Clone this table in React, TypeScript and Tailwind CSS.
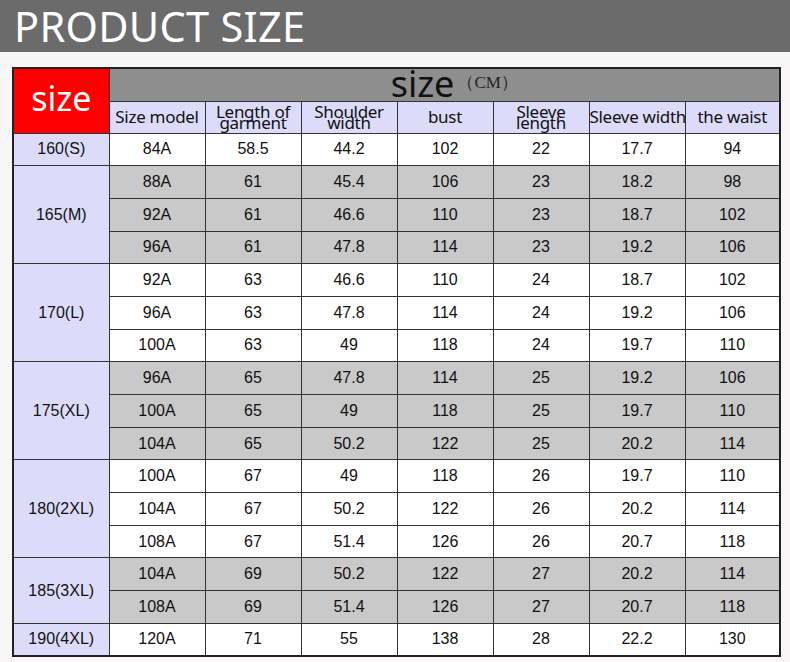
const groups: { size: string; rows: string[][]; shaded: boolean }[] = [
  { size: '160(S)', shaded: false, rows: [['84A', '58.5', '44.2', '102', '22', '17.7', '94']] },
  {
    size: '165(M)',
    shaded: true,
    rows: [
      ['88A', '61', '45.4', '106', '23', '18.2', '98'],
      ['92A', '61', '46.6', '110', '23', '18.7', '102'],
      ['96A', '61', '47.8', '114', '23', '19.2', '106'],
    ],
  },
  {
    size: '170(L)',
    shaded: false,
    rows: [
      ['92A', '63', '46.6', '110', '24', '18.7', '102'],
      ['96A', '63', '47.8', '114', '24', '19.2', '106'],
      ['100A', '63', '49', '118', '24', '19.7', '110'],
    ],
  },
  {
    size: '175(XL)',
    shaded: true,
    rows: [
      ['96A', '65', '47.8', '114', '25', '19.2', '106'],
      ['100A', '65', '49', '118', '25', '19.7', '110'],
      ['104A', '65', '50.2', '122', '25', '20.2', '114'],
    ],
  },
  {
    size: '180(2XL)',
    shaded: false,
    rows: [
      ['100A', '67', '49', '118', '26', '19.7', '110'],
      ['104A', '67', '50.2', '122', '26', '20.2', '114'],
      ['108A', '67', '51.4', '126', '26', '20.7', '118'],
    ],
  },
  {
    size: '185(3XL)',
    shaded: true,
    rows: [
      ['104A', '69', '50.2', '122', '27', '20.2', '114'],
      ['108A', '69', '51.4', '126', '27', '20.7', '118'],
    ],
  },
  { size: '190(4XL)', shaded: false, rows: [['120A', '71', '55', '138', '28', '22.2', '130']] },
];

const headers: (string | [string, string])[] = [
  'Size model',
  ['Length of', 'garment'],
  ['Shoulder', 'width'],
  'bust',
  ['Sleeve', 'length'],
  'Sleeve width',
  'the waist',
];

const App = () => {
  return (
    <div className="min-h-screen w-[790px] bg-[#f8f6f6]">
      <div className="h-[52px] bg-[#6b6b6b] pl-[14px] flex items-center">
        <h1 className="text-white text-[41.5px] leading-[52px] tracking-[0.3px] font-['Noto_Sans',sans-serif]">
          PRODUCT SIZE
        </h1>
      </div>

      <div className="pt-[15px] pl-[12px]">
        <table className="table-fixed border-collapse border-2 border-[#222] w-[767px] font-['Liberation_Sans',Arial,sans-serif] text-[16px] text-[#111]">
          <colgroup>
            <col className="w-[96px]" />
            <col className="w-[96px]" />
            <col className="w-[96px]" />
            <col className="w-[96px]" />
            <col className="w-[96px]" />
            <col className="w-[96px]" />
            <col className="w-[96px]" />
            <col className="w-[95px]" />
          </colgroup>
          <thead>
            <tr className="h-[33px]">
              <th
                rowSpan={2}
                className="bg-[#ff0000] border border-[#333] text-white font-normal text-[34px] leading-none font-['Noto_Sans',sans-serif] p-0"
              >
                <span className="relative -top-[3px]">size</span>
              </th>
              <th colSpan={7} className="bg-[#8e8e8e] border border-[#333] font-normal p-0">
                <div className="flex items-end justify-center h-[31px] pl-[20px] overflow-visible">
                  <span className="text-[36px] leading-[32px] text-[#111] font-['Noto_Sans',sans-serif]">size</span>
                  <span className="text-[17px] leading-none mb-[9px] ml-[3px] text-[#222] font-['Liberation_Serif',serif]">
                    （CM）
                  </span>
                </div>
              </th>
            </tr>
            <tr className="h-[32px]">
              {headers.map((h, i) => (
                <th
                  key={i}
                  className="bg-[#dcdcfa] border border-[#333] font-normal text-[17px] text-[#111] tracking-[-0.3px] font-['Noto_Sans',sans-serif] whitespace-nowrap p-0"
                >
                  {typeof h === 'string' ? (
                    <span className="leading-[20px]">{h}</span>
                  ) : (
                    <div className="flex flex-col items-center leading-[11px]">
                      <span>{h[0]}</span>
                      <span>{h[1]}</span>
                    </div>
                  )}
                </th>
              ))}
            </tr>
          </thead>
          <tbody>
            {groups.map((g) =>
              g.rows.map((r, ri) => (
                <tr key={g.size + ri} className="h-[32.7px]">
                  {ri === 0 && (
                    <td rowSpan={g.rows.length} className="bg-[#dcdcfa] border border-[#333] text-center p-0">
                      {g.size}
                    </td>
                  )}
                  {r.map((v, ci) => (
                    <td
                      key={ci}
                      className={`border border-[#333] text-center p-0 ${g.shaded ? 'bg-[#c9c9c9]' : 'bg-white'}`}
                    >
                      {v}
                    </td>
                  ))}
                </tr>
              ))
            )}
          </tbody>
        </table>
      </div>
    </div>
  );
};

export default App;
